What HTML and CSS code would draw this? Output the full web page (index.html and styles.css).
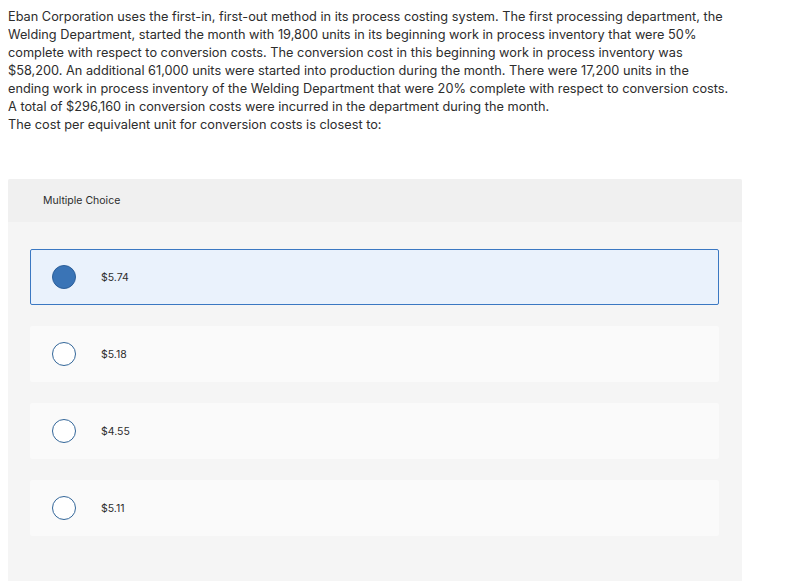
FILE: index.html
```html
<!DOCTYPE html>
<html lang="en">
<head>
    <meta charset="UTF-8">
    <meta name="viewport" content="width=device-width, initial-scale=1.0">
    <title>Multiple Choice</title>
    <link rel="stylesheet" href="styles.css">
</head>
<body>
    <div class="question">
        <p>Eban Corporation uses the first-in, first-out method in its process costing system. The first processing department, the Welding Department, started the month with 19,800 units in its beginning work in process inventory that were 50% complete with respect to conversion costs. The conversion cost in this beginning work in process inventory was $58,200. An additional 61,000 units were started into production during the month. There were 17,200 units in the ending work in process inventory of the Welding Department that were 20% complete with respect to conversion costs. A total of $296,160 in conversion costs were incurred in the department during the month.</p>
        <p>The cost per equivalent unit for conversion costs is closest to:</p>
    </div>

    <div class="choice-panel">
        <div class="choice-header">Multiple Choice</div>
        <div class="choice-list">
            <label class="choice selected">
                <span class="radio"></span>
                <span class="choice-text">$5.74</span>
            </label>
            <label class="choice">
                <span class="radio"></span>
                <span class="choice-text">$5.18</span>
            </label>
            <label class="choice">
                <span class="radio"></span>
                <span class="choice-text">$4.55</span>
            </label>
            <label class="choice">
                <span class="radio"></span>
                <span class="choice-text">$5.11</span>
            </label>
        </div>
    </div>
</body>
</html>
```

FILE: styles.css
```css
body {
    margin: 8px;
    font-family: "Inter", "Open Sans", sans-serif;
    color: #2d2d2d;
    background: #fff;
}
.question {
    width: 722px;
}
.question p {
    margin: 0;
    font-size: 12.75px;
    line-height: 18px;
}
.choice-panel {
    margin-top: 45px;
    width: 734px;
    height: 420px;
    background-color: #f5f5f5;
    border-radius: 2px;
}
.choice-header {
    height: 43px;
    display: flex;
    align-items: center;
    padding-left: 35px;
    background-color: #f0f0f0;
    font-size: 10.5px;
    border-radius: 2px 2px 0 0;
}
.choice-list {
    padding: 27px 23px 0 22px;
    display: flex;
    flex-direction: column;
    gap: 21px;
}
.choice {
    display: flex;
    align-items: center;
    height: 56px;
    box-sizing: border-box;
    padding-left: 21px;
    background-color: #fafafa;
    border: 1px solid transparent;
    border-radius: 2px;
}
.choice.selected {
    background-color: #eaf2fc;
    border-color: #3b78c2;
}
.radio {
    width: 22px;
    height: 22px;
    border: 1px solid #336699;
    border-radius: 50%;
    background: #fff;
    margin-right: 25px;
}
.selected .radio {
    background: #3a74b6;
    border-color: #2d5f99;
}
.choice-text {
    font-size: 10.5px;
}
```
